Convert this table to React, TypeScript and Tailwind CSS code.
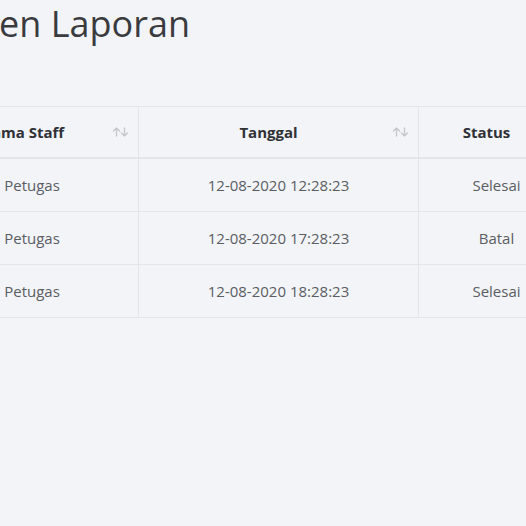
import React from "react";

type Row = { staff: string; tanggal: string; status: string };

const rows: Row[] = [
  { staff: "Petugas", tanggal: "12-08-2020 12:28:23", status: "Selesai" },
  { staff: "Petugas", tanggal: "12-08-2020 17:28:23", status: "Batal" },
  { staff: "Petugas", tanggal: "12-08-2020 18:28:23", status: "Selesai" },
];

function SortIcon() {
  return (
    <svg width="17" height="10" viewBox="0 0 17 10" fill="none" stroke="#c4c7cc" strokeWidth="1.4" strokeLinecap="round" strokeLinejoin="round">
      <path d="M4.5 9V1M1.5 4l3-3 3 3" />
      <path d="M12.5 1v8M9.5 6l3 3 3-3" />
    </svg>
  );
}

function HeadCell({ label, width }: { label: string; width: string }) {
  return (
    <div className={`${width} flex items-center shrink-0 border-r border-[#e3e5ea] pl-[6px] pr-[9px]`}>
      <span className="flex-1 text-center text-[15px] font-bold text-[#2f3136]">{label}</span>
      <SortIcon />
    </div>
  );
}

export default function App() {
  return (
    <div className="w-[526px] h-[526px] overflow-hidden bg-[#f2f4f8]" style={{ fontFamily: '"Open Sans", sans-serif' }}>
      <h1 className="-ml-[158px] whitespace-nowrap text-[36px] leading-[48px] text-[#3a3b3f]">Manajemen Laporan</h1>
      <div className="-ml-[74px] mt-[58px] w-[800px] border-t border-[#e3e5ea]">
        <div className="flex h-[52px] border-b-2 border-[#e3e5ea]">
          <HeadCell label="Nama Staff" width="w-[213px]" />
          <HeadCell label="Tanggal" width="w-[280px]" />
          <HeadCell label="Status" width="w-[156px]" />
        </div>
        {rows.map((r, i) => (
          <div key={i} className="flex h-[53px] border-b border-[#e3e5ea] text-[15px] text-[#5a5d63]">
            <div className="w-[213px] shrink-0 flex items-center justify-center border-r border-[#e3e5ea]">{r.staff}</div>
            <div className="w-[280px] shrink-0 flex items-center justify-center border-r border-[#e3e5ea]">{r.tanggal}</div>
            <div className="w-[156px] shrink-0 flex items-center justify-center border-r border-[#e3e5ea]">{r.status}</div>
          </div>
        ))}
      </div>
    </div>
  );
}
